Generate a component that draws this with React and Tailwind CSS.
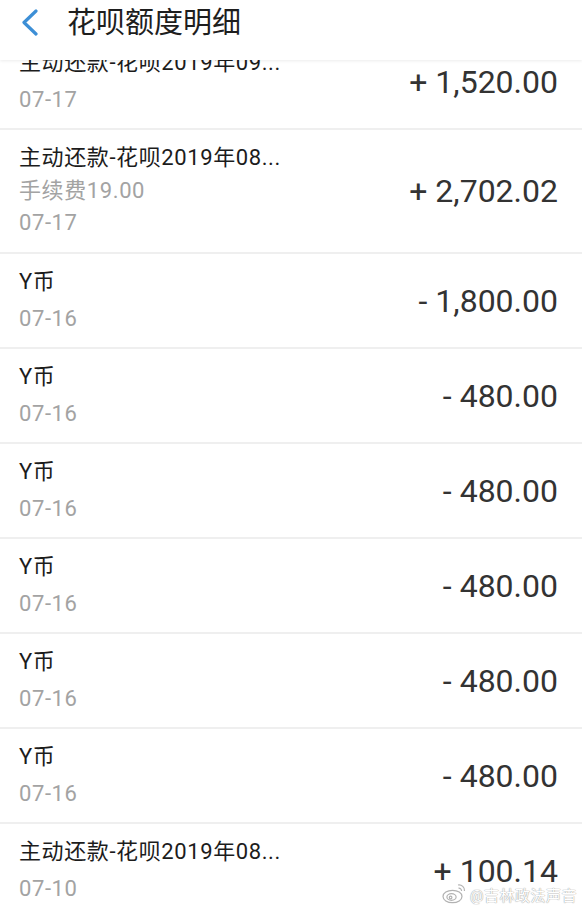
const rows = [
  { title: "主动还款-花呗2019年09...", date: "07-17", amount: "+ 1,520.00" },
  { title: "主动还款-花呗2019年08...", fee: "手续费19.00", date: "07-17", amount: "+ 2,702.02" },
  { title: "Y币", date: "07-16", amount: "- 1,800.00" },
  { title: "Y币", date: "07-16", amount: "- 480.00" },
  { title: "Y币", date: "07-16", amount: "- 480.00" },
  { title: "Y币", date: "07-16", amount: "- 480.00" },
  { title: "Y币", date: "07-16", amount: "- 480.00" },
  { title: "Y币", date: "07-16", amount: "- 480.00" },
  { title: "主动还款-花呗2019年08...", date: "07-10", amount: "+ 100.14" },
];

const font = { fontFamily: 'Roboto, "Noto Sans CJK SC", sans-serif' };

const Row = ({ row, first }) => (
  <div
    className={`flex items-center justify-between pl-[19px] pr-[24px] border-b-2 border-[#efefef] shrink-0 ${
      first ? "-mt-[25px]" : ""
    } ${row.fee ? "h-[124px]" : "h-[95px]"}`}
  >
    <div className="flex flex-col tracking-[0.6px]">
      <p className="text-[22px] leading-[30px] text-[#1c1c1c] whitespace-nowrap">
        {row.title}
      </p>
      {row.fee ? (
        <>
          <p className="mt-[2px] text-[22px] leading-[32px] text-[#a3a3a3]">{row.fee}</p>
          <p className="text-[22px] leading-[32px] text-[#a3a3a3]">{row.date}</p>
        </>
      ) : (
        <p className="mt-[7px] text-[22px] leading-[30px] text-[#a3a3a3]">{row.date}</p>
      )}
    </div>
    <p className="text-[32px] leading-none text-[#333] whitespace-pre">{row.amount}</p>
  </div>
);

const WeiboLogo = () => (
  <svg width="25" height="22" viewBox="0 0 25 22" fill="none" stroke="#a0a0a0" strokeWidth="1.2">
    <ellipse cx="10.5" cy="14.5" rx="9.5" ry="6.2" fill="#fff" />
    <ellipse cx="9.5" cy="15" rx="4.6" ry="3.3" />
    <circle cx="8.6" cy="15.5" r="1.3" />
    <path d="M16 3 A5.5 5.5 0 0 1 22.5 9" />
    <path d="M16.5 6.2 A2.8 2.8 0 0 1 19.6 9" />
  </svg>
);

export default function App() {
  return (
    <div className="relative flex flex-col w-[582px] h-[913px] overflow-hidden bg-white" style={font}>
      <header className="relative z-10 flex items-center h-[60px] shrink-0 bg-white shadow-[0_1px_3px_rgba(0,0,0,0.08)]">
        <svg className="ml-[21px] mb-[16px]" width="18" height="27" viewBox="0 0 18 27" fill="none">
          <polyline
            points="15,2 3,13.5 15,25"
            stroke="#3d8fd6"
            strokeWidth="3.2"
            strokeLinecap="round"
            strokeLinejoin="round"
          />
        </svg>
        <h1 className="ml-[28px] mb-[14px] text-[29px] leading-none text-[#1e1e1e]">花呗额度明细</h1>
      </header>
      <div className="flex flex-col flex-1 overflow-hidden">
        {rows.map((row, i) => (
          <Row key={i} row={row} first={i === 0} />
        ))}
      </div>
      <div className="absolute right-[5px] bottom-[9px] flex items-end gap-[3px] opacity-80">
        <WeiboLogo />
        <span className="text-[15px] leading-none tracking-[0.5px] text-white [text-shadow:0_0_1px_#888,0_0_1px_#888]">
          @吉林政法声音
        </span>
      </div>
    </div>
  );
}
